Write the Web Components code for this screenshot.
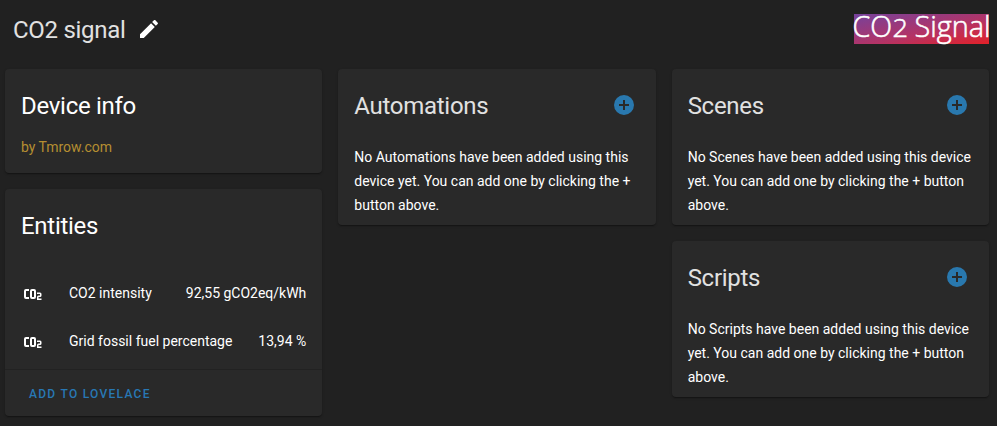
<!DOCTYPE html>
<html lang="en">
<head>
<meta charset="utf-8">
<title>CO2 signal</title>
<style>
html,body{margin:0;height:100%;background:#212121}
body{font-family:Roboto,"Noto Sans",sans-serif;font-size:14px;color:#fff;overflow:hidden}
</style>
</head>
<body>
<device-page>
  <page-title slot="header">CO2 signal</page-title>
  <brand-logo slot="header"></brand-logo>
  <card-column>
    <info-card style="--card-height:104px">
      <span slot="title">Device info</span>
      <maker-line>by Tmrow.com</maker-line>
    </info-card>
    <info-card style="--card-height:227px">
      <span slot="title">Entities</span>
      <entity-list>
        <entity-row value="92,55 gCO2eq/kWh">CO2 intensity</entity-row>
        <entity-row value="13,94 %">Grid fossil fuel percentage</entity-row>
      </entity-list>
      <card-action slot="actions">Add to Lovelace</card-action>
    </info-card>
  </card-column>
  <card-column>
    <related-card name="Automations">No Automations have been added using this device yet. You can add one by clicking the + button above.</related-card>
  </card-column>
  <card-column>
    <related-card name="Scenes">No Scenes have been added using this device yet. You can add one by clicking the + button above.</related-card>
    <related-card name="Scripts">No Scripts have been added using this device yet. You can add one by clicking the + button above.</related-card>
  </card-column>
</device-page>
<script>
function define(name, html) {
  const template = document.createElement('template');
  template.innerHTML = html;
  customElements.define(name, class extends HTMLElement {
    constructor() {
      super();
      this.attachShadow({mode: 'open'}).append(template.content.cloneNode(true));
    }
    connectedCallback() {
      this.shadowRoot.querySelectorAll('[data-attr]').forEach(el => {
        el.textContent = this.getAttribute(el.dataset.attr);
      });
    }
  });
}

define('device-page', `
<style>
:host{display:block;box-sizing:border-box;width:997px;height:426px;padding:0 8px 0 5px;background:#212121}
header{display:flex;justify-content:space-between;align-items:flex-start;height:69px;padding-left:8px}
main{display:grid;grid-template-columns:repeat(3,1fr);gap:16px;align-items:start}
</style>
<header><slot name="header"></slot></header>
<main><slot></slot></main>`);

define('card-column', `
<style>:host{display:flex;flex-direction:column;gap:16px;min-width:0}</style><slot></slot>`);

define('page-title', `
<style>
:host{display:flex;align-items:center;padding-top:14px;font-size:24px;line-height:32px;letter-spacing:-.012em;color:#e1e1e1}
svg{width:24px;height:24px;margin-left:11px;margin-top:-2px;fill:#fff}
</style>
<slot></slot>
<svg viewBox="0 0 24 24"><path d="M20.71 7.04c.39-.39.39-1.04 0-1.41l-2.34-2.34c-.37-.39-1.02-.39-1.41 0l-1.84 1.83 3.75 3.75M3 17.25V21h3.75L17.81 9.93l-3.75-3.75L3 17.25z"/></svg>`);

define('brand-logo', `
<style>
:host{display:block;width:135px;height:30px;margin-top:14px;background:linear-gradient(to bottom right,#75429c,#b43365 58%,#e32128)}
svg{display:block;overflow:visible}
text{font-family:"Open Sans","Noto Sans",sans-serif;font-weight:300;fill:#fff;stroke:#fff;stroke-width:.55}
</style>
<svg width="135" height="30" viewBox="0 0 135 30">
<text x="-1.500" y="22.500" font-size="29" textLength="39.500" lengthAdjust="spacingAndGlyphs">CO</text>
<text x="38.500" y="22.500" font-size="25" textLength="15.500" lengthAdjust="spacingAndGlyphs">2</text>
<text x="60.500" y="22.500" font-size="28.500" textLength="76" lengthAdjust="spacingAndGlyphs">Signal</text>
</svg>`);

define('info-card', `
<style>
:host{display:flex;flex-direction:column;box-sizing:border-box;height:var(--card-height);background:#292929;border-radius:4px;
box-shadow:0 2px 1px -1px rgba(0,0,0,.2),0 1px 1px 0 rgba(0,0,0,.14),0 1px 3px 0 rgba(0,0,0,.12)}
.head{display:flex;align-items:center;justify-content:space-between;height:48px;padding:12px 16px 0;font-size:24px;line-height:48px;letter-spacing:-.012em;color:var(--title-color,#fff)}
.title{padding-top:2px}
.body{flex:1}
</style>
<div class="head"><div class="title"><slot name="title"></slot></div><slot name="icon"></slot></div>
<div class="body"><slot></slot></div>
<slot name="actions"></slot>`);

define('maker-line', `
<style>:host{display:block;padding:8px 16px;line-height:20px;color:#b58e31}</style><slot></slot>`);

define('entity-list', `
<style>:host{display:block;padding:20px 16px 0}</style><slot></slot>`);

define('entity-row', `
<style>
:host{display:flex;align-items:center;height:48px;line-height:20px}
svg{width:24px;height:24px;margin:2px 24px 0 0;fill:#fff}
.name{flex:1}
</style>
<svg viewBox="0 0 24 24"><path d="M5 7a2 2 0 0 0-2 2v6a2 2 0 0 0 2 2h3v-2H5V9h3V7H5m6 0a2 2 0 0 0-2 2v6a2 2 0 0 0 2 2h2a2 2 0 0 0 2-2V9a2 2 0 0 0-2-2h-2m0 2h2v6h-2V9m5 1.5V12h3v1.500h-1.500A1.500 1.500 0 0 0 16 15v3h4.500v-1.500h-3V15H19a1.500 1.500 0 0 0 1.500-1.500V12a1.500 1.500 0 0 0-1.500-1.500h-3z"/></svg>
<span class="name"><slot></slot></span><span data-attr="value"></span>`);

define('card-action', `
<style>
:host{display:flex;align-items:center;box-sizing:border-box;height:47px;padding:2px 24px 0;border-top:1px solid #222;font-size:12px;font-weight:500;letter-spacing:1.28px;text-transform:uppercase;color:#2878b4}
</style><slot></slot>`);

define('related-card', `
<style>
:host{display:block}
svg{display:block;width:24px;height:24px;margin-right:4px;fill:#2978ae}
.text{padding:16px 16px 0;line-height:24px}
info-card{--card-height:156px;--title-color:#e1e1e1}
</style>
<info-card>
<span slot="title" data-attr="name"></span>
<svg slot="icon" viewBox="0 0 24 24"><path d="M17 13h-4v4h-2v-4H7v-2h4V7h2v4h4m-5-9A10 10 0 0 0 2 12a10 10 0 0 0 10 10 10 10 0 0 0 10-10A10 10 0 0 0 12 2z"/></svg>
<div class="text"><slot></slot></div>
</info-card>`);
</script>
</body>
</html>
